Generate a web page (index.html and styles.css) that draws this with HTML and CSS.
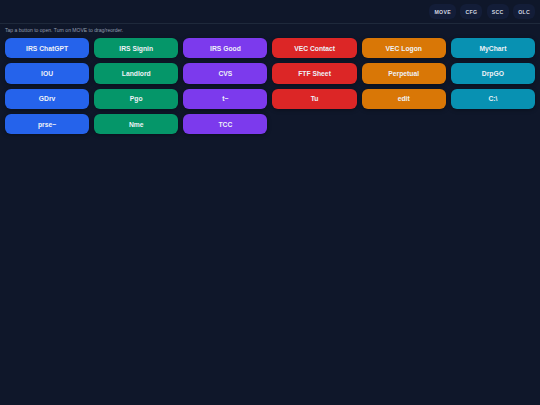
FILE: index.html
```html
<!DOCTYPE html>
<html lang="en">
<head>
<meta charset="utf-8">
<title>Launcher</title>
<link rel="stylesheet" href="styles.css">
</head>
<body>
<header class="topbar">
  <button class="tool">MOVE</button>
  <button class="tool">CFG</button>
  <button class="tool">SCC</button>
  <button class="tool">OLC</button>
</header>
<p class="hint">Tap a button to open. Turn on MOVE to drag/reorder.</p>
<main class="grid">
  <a class="tile blue">IRS ChatGPT</a>
  <a class="tile green">IRS Signin</a>
  <a class="tile purple">IRS Good</a>
  <a class="tile red">VEC Contact</a>
  <a class="tile orange">VEC Logon</a>
  <a class="tile cyan">MyChart</a>
  <a class="tile blue">IOU</a>
  <a class="tile green">Landlord</a>
  <a class="tile purple">CVS</a>
  <a class="tile red">FTF Sheet</a>
  <a class="tile orange">Perpetual</a>
  <a class="tile cyan">DrpGO</a>
  <a class="tile blue">GDrv</a>
  <a class="tile green">Pgo</a>
  <a class="tile purple">t~</a>
  <a class="tile red">Tu</a>
  <a class="tile orange">edit</a>
  <a class="tile cyan">C:\</a>
  <a class="tile blue">prse~</a>
  <a class="tile green">Nme</a>
  <a class="tile purple">TCC</a>
</main>
</body>
</html>
```
FILE: styles.css
```css
* { box-sizing: border-box; }
html, body { margin: 0; height: 100%; }
body {
  background: #0f172a;
  color: #e5e7eb;
  font-family: "Liberation Sans", Arial, sans-serif;
  overflow: hidden;
}
.topbar {
  display: flex;
  justify-content: flex-end;
  align-items: center;
  gap: 4.5px;
  height: 24px;
  padding: 0 5px;
  border-bottom: 1px solid #1e293b;
}
.tool {
  height: 15px;
  padding: 0 5px;
  border: 0;
  border-radius: 6px;
  background: #131d38;
  color: #d3d9e3;
  font: 700 5.2px "Liberation Sans", Arial, sans-serif;
  letter-spacing: 0.3px;
}
.hint {
  margin: 0;
  padding: 3px 5px 0;
  height: 14px;
  font-size: 5.05px;
  line-height: 7px;
  color: #8f9bad;
}
.grid {
  display: grid;
  grid-template-columns: repeat(6, 1fr);
  grid-auto-rows: 20.3px;
  gap: 5px;
  padding: 0 5px;
}
.tile {
  display: flex;
  align-items: center;
  justify-content: center;
  border-radius: 6px;
  color: #eef2f7;
  font-size: 6.75px;
  font-weight: 700;
  box-shadow: 0 1px 4px rgba(0, 0, 0, 0.35);
}
.blue { background: #2563eb; }
.green { background: #059669; }
.purple { background: #7c3aed; }
.red { background: #dc2626; }
.orange { background: #d97706; }
.cyan { background: #0891b2; }
```
